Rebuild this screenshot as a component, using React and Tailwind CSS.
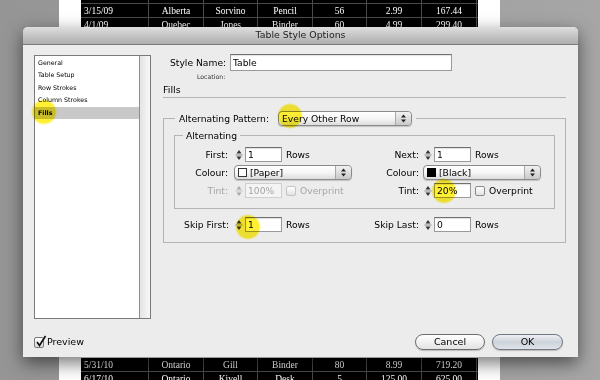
const topRows = [
  ['2/26/09', 'Ontario', 'Gill', 'Pen', '27', '19.99', '539.73'],
  ['3/15/09', 'Alberta', 'Sorvino', 'Pencil', '56', '2.99', '167.44'],
  ['4/1/09', 'Quebec', 'Jones', 'Binder', '60', '4.99', '299.40'],
]
const bottomRows = [
  ['5/31/10', 'Ontario', 'Gill', 'Binder', '80', '8.99', '719.20'],
  ['6/17/10', 'Ontario', 'Kivell', 'Desk', '5', '125.00', '625.00'],
]
const sections = ['General', 'Table Setup', 'Row Strokes', 'Column Strokes', 'Fills']

const ui = { fontFamily: '"DejaVu Sans", Verdana, sans-serif' }

function TableRows({ rows }) {
  return rows.map((r, i) => (
    <div key={i} className="grid grid-cols-[68px_55px_54px_55px_54px_55px_55px] h-[14px] border-b border-[#4a4a4a]">
      {r.map((c, j) => (
        <div key={j} className={'border-r border-[#4a4a4a] leading-[14px] ' + (j === 0 ? 'pl-[3px] text-left' : 'text-center')}>{c}</div>
      ))}
    </div>
  ))
}

function Arrows({ dim }) {
  const f = dim ? '#a8a8a8' : '#333'
  return (
    <svg width="8" height="14" viewBox="0 0 8 14">
      <path d="M4 2 L6.5 5.5 H1.5Z" fill={f} />
      <line x1="0.5" x2="7.5" y1="7" y2="7" stroke={dim ? '#c4c4c4' : '#888'} />
      <path d="M1.5 8.5 H6.5 L4 12Z" fill={f} />
    </svg>
  )
}

function Spinner({ value, dim }) {
  return (
    <div className="flex h-[15px] items-stretch">
      <div className="w-[12px] flex items-center justify-center"><Arrows dim={dim} /></div>
      <div className={'w-[37px] border pl-[2px] leading-[13px] ' + (dim
        ? 'border-[#cfcfcf] bg-[#f4f4f4] text-[#a6a6a6]'
        : 'border-[#9a9a9a] border-t-[#6f6f6f] bg-white text-black shadow-[inset_0_1px_1px_rgba(0,0,0,0.12)]')}>
        {value}
      </div>
    </div>
  )
}

function Select({ children, w }) {
  return (
    <div className={'flex h-[15px] items-stretch rounded-[4px] border border-[#8a8a8a] bg-gradient-to-b from-white via-[#f6f6f6] to-[#dcdcdc] shadow-[0_1px_1px_rgba(0,0,0,0.18)] ' + w}>
      <div className="flex-1 flex items-center gap-[3px] pl-[3px] leading-none whitespace-nowrap">{children}</div>
      <div className="w-[16px] flex items-center justify-center border-l border-[#a8a8a8] rounded-r-[4px] bg-gradient-to-b from-[#f2f2f2] to-[#c9c9c9]">
        <svg width="7" height="11" viewBox="0 0 7 11">
          <path d="M3.5 1.5 L6 4.5 H1Z" fill="#222" />
          <path d="M1 6.5 H6 L3.5 9.5Z" fill="#222" />
        </svg>
      </div>
    </div>
  )
}

function Check({ dim }) {
  return <div className={'w-[10px] h-[10px] rounded-[2px] border bg-gradient-to-b from-white to-[#e2e2e2] ' + (dim ? 'border-[#c4c4c4]' : 'border-[#8a8a8a]')} />
}

function Glow({ className }) {
  return <div className={'absolute w-[26px] h-[26px] rounded-full mix-blend-multiply bg-[radial-gradient(circle,rgba(255,236,0,0.8)_58%,rgba(255,236,0,0)_72%)] ' + className} />
}

export default function App() {
  return (
    <div className="relative w-[600px] h-[380px] overflow-hidden bg-gradient-to-r from-[#959595] to-[#a6a6a6]">

      {/* document page behind the dialog */}
      <div className="ml-[59px] w-[441px] h-full bg-white px-[22px] overflow-hidden text-white text-[9.5px]" style={{ fontFamily: '"Liberation Serif", serif' }}>
        <div className="bg-black mt-[-10px]"><TableRows rows={topRows} /></div>
        <div className="h-[326px]" />
        <div className="bg-black"><TableRows rows={bottomRows} /></div>
      </div>

      {/* dialog window */}
      <div className="absolute left-[23px] top-[27px] w-[555px] h-[330px] bg-[#ececec] rounded-t-[5px] shadow-[0_6px_18px_rgba(0,0,0,0.55)] text-[9.2px] text-black" style={ui}>
        <div className="h-[18px] rounded-t-[5px] bg-gradient-to-b from-[#dedede] to-[#aeaeae] border-b border-[#7c7c7c] flex items-center justify-center text-[9.4px] text-[#222]">
          Table Style Options
        </div>

        <div className="flex h-[282px]">
          <div className="ml-[11px] mt-[10px] w-[117px] h-[264px] flex border border-[#7a7a7a] bg-white">
            <div className="flex-1 pt-[0.5px] text-[6.3px] text-black">
              {sections.map(s => (
                <div key={s} className={'h-[12.6px] leading-[12.6px] pl-[3px] ' + (s === 'Fills' ? 'bg-[#c8c8c8] font-bold' : '')}>{s}</div>
              ))}
            </div>
            <div className="w-[11px] border-l border-[#8f8f8f] bg-gradient-to-r from-[#e4e4e4] to-[#f8f8f8]" />
          </div>

          <div className="ml-[12px] mr-[12px] flex-1">
            <div className="mt-[9px] flex items-center h-[17px] pl-[7px]">
              <span className="w-[55px] shrink-0 whitespace-nowrap">Style Name:</span>
              <div className="ml-[5px] w-[222px] h-[17px] border border-[#9a9a9a] border-t-[#707070] bg-white pl-[2px] leading-[15px] shadow-[inset_0_1px_1px_rgba(0,0,0,0.12)]">Table</div>
            </div>
            <div className="mt-[2px] h-[8px] leading-[8px] pl-[34px] text-[6.2px] text-[#333]">Location:</div>
            <div className="mt-[3px] h-[12px] leading-[12px] text-[9.5px]">Fills</div>
            <div className="mt-[1px] h-px bg-[#b4b4b4]" />

            <fieldset className="mt-[13px] border border-[#b4b4b4] pb-[10px]">
              <legend className="ml-[11px] px-[4px] flex items-center h-[15px] whitespace-nowrap">
                <span>Alternating Pattern:</span>
                <div className="ml-[9px]"><Select w="w-[134px]"><span>Every Other Row</span></Select></div>
              </legend>

              <fieldset className="mt-[4px] mx-[10px] border border-[#b4b4b4] pb-[10px]">
                <legend className="ml-[8px] px-[3px] h-[11px] leading-[11px]">Alternating</legend>
                <div className="mt-[6px] flex flex-col gap-[3px] whitespace-nowrap">
                  <div className="flex items-center h-[15px]">
                    <div className="w-[194px] flex items-center">
                      <span className="w-[53px] text-right">First:</span>
                      <div className="ml-[5px]"><Spinner value="1" /></div>
                      <span className="ml-[4px]">Rows</span>
                    </div>
                    <span className="w-[50px] text-right">Next:</span>
                    <div className="ml-[3px]"><Spinner value="1" /></div>
                    <span className="ml-[4px]">Rows</span>
                  </div>
                  <div className="flex items-center h-[15px]">
                    <div className="w-[194px] flex items-center">
                      <span className="w-[53px] text-right">Colour:</span>
                      <div className="ml-[6px]"><Select w="w-[118px]"><span className="w-[9px] h-[9px] border border-[#333] bg-white" /><span>[Paper]</span></Select></div>
                    </div>
                    <span className="w-[50px] text-right">Colour:</span>
                    <div className="ml-[4px]"><Select w="w-[118px]"><span className="w-[9px] h-[9px] bg-black" /><span>[Black]</span></Select></div>
                  </div>
                  <div className="flex items-center h-[15px]">
                    <div className="w-[194px] flex items-center text-[#a6a6a6]">
                      <span className="w-[53px] text-right">Tint:</span>
                      <div className="ml-[5px]"><Spinner value="100%" dim /></div>
                      <div className="ml-[4px]"><Check dim /></div>
                      <span className="ml-[4px]">Overprint</span>
                    </div>
                    <span className="w-[50px] text-right">Tint:</span>
                    <div className="ml-[3px]"><Spinner value="20%" /></div>
                    <div className="ml-[4px]"><Check /></div>
                    <span className="ml-[4px]">Overprint</span>
                  </div>
                </div>
              </fieldset>

              <div className="mt-[8px] flex items-center h-[15px] whitespace-nowrap">
                <div className="w-[205px] flex items-center">
                  <span className="w-[65px] text-right">Skip First:</span>
                  <div className="ml-[4px]"><Spinner value="1" /></div>
                  <span className="ml-[4px]">Rows</span>
                </div>
                <span className="w-[50px] text-right">Skip Last:</span>
                <div className="ml-[3px]"><Spinner value="0" /></div>
                <span className="ml-[4px]">Rows</span>
              </div>
            </fieldset>
          </div>
        </div>

        <div className="h-[30px] flex items-start pt-[7px] pl-[11px] pr-[15px]">
          <div className="flex items-center h-[16px]">
            <div className="relative w-[10px] h-[11px] rounded-[2px] border border-[#7a7a7a] bg-gradient-to-b from-white to-[#dadada]">
              <svg className="absolute left-[0px] top-[-3px]" width="12" height="13" viewBox="0 0 12 13">
                <path d="M2 7 L4.5 10.5 L10.5 1" fill="none" stroke="#111" strokeWidth="1.7" />
              </svg>
            </div>
            <span className="ml-[3px] text-[9.5px]">Preview</span>
          </div>
          <div className="ml-auto flex gap-[7px]">
            <div className="w-[70px] h-[16px] rounded-full border border-[#6d6d6d] bg-gradient-to-b from-white to-[#e3e3e3] flex items-center justify-center text-[9.5px] shadow-[0_1px_1px_rgba(0,0,0,0.2)]">Cancel</div>
            <div className="w-[71px] h-[16px] rounded-full border border-[#6f7883] bg-gradient-to-b from-[#eef0f3] via-[#cdd3da] to-[#dfe3e8] flex items-center justify-center text-[9.5px] shadow-[0_1px_1px_rgba(0,0,0,0.2)]">OK</div>
          </div>
        </div>
      </div>

      <Glow className="left-[31px] top-[99px]" />
      <Glow className="left-[277px] top-[103px]" />
      <Glow className="left-[431px] top-[178px]" />
      <Glow className="left-[235px] top-[214px]" />
    </div>
  )
}
